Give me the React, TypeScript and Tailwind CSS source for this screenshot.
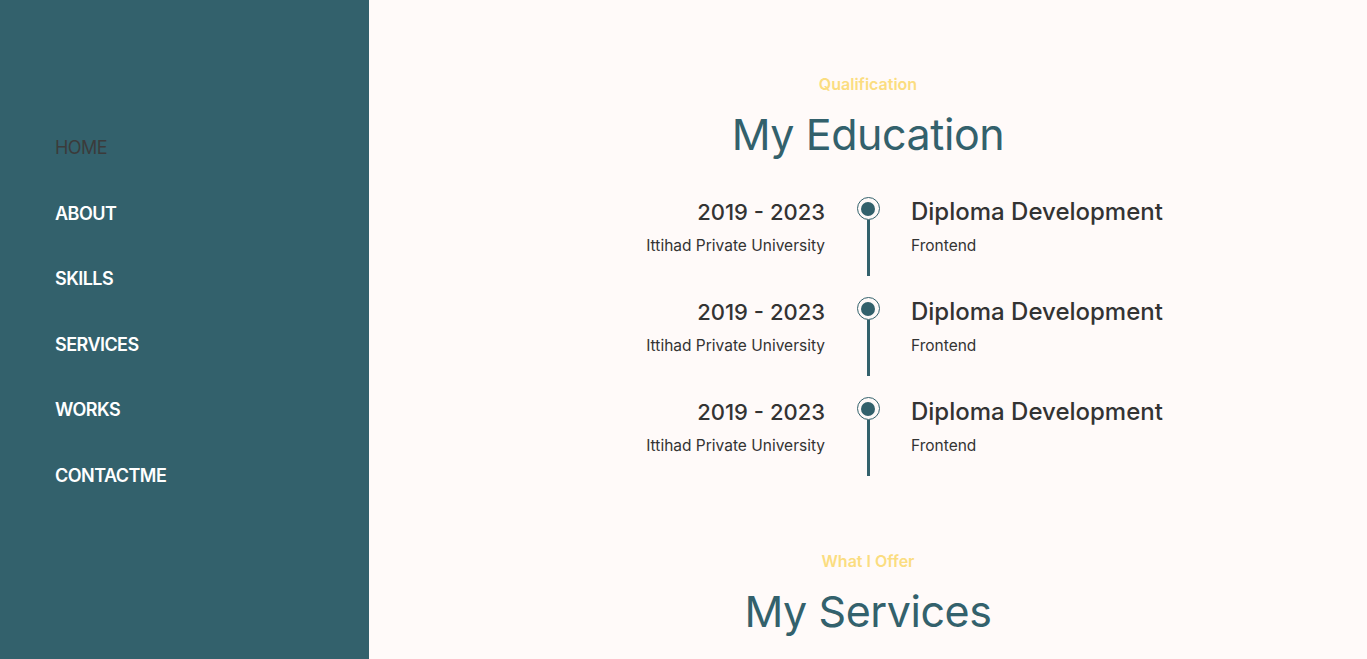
import React from 'react';

const links = ['HOME', 'ABOUT', 'SKILLS', 'SERVICES', 'WORKS', 'CONTACTME'];

const education = [
  { years: '2019 - 2023', school: 'Ittihad Private University', title: 'Diploma Development', field: 'Frontend' },
  { years: '2019 - 2023', school: 'Ittihad Private University', title: 'Diploma Development', field: 'Frontend' },
  { years: '2019 - 2023', school: 'Ittihad Private University', title: 'Diploma Development', field: 'Frontend' },
];

function Sidebar() {
  return (
    <aside className="w-[369px] shrink-0 bg-[#33616c] pt-[134px] pl-[55px]">
      <nav className="flex flex-col">
        {links.map((l, i) => (
          <a
            key={l}
            href="#"
            className={
              'h-[65.5px] text-[18px] leading-[28px] tracking-[-0.03em] ' +
              (i === 0 ? 'font-normal text-[#3b3b3b]' : 'font-semibold text-white')
            }
          >
            {l}
          </a>
        ))}
      </nav>
    </aside>
  );
}

function SectionTitle({ sub, title }: { sub: string; title: string }) {
  return (
    <div className="flex flex-col items-center">
      <div className="text-[16px] leading-[22px] font-semibold text-[#fbdd80]">{sub}</div>
      <h2 className="mt-[15px] text-[43px] leading-[48px] font-normal text-[#33616c] tracking-[-0.01em]">{title}</h2>
    </div>
  );
}

function Timeline() {
  return (
    <div className="mt-[39px] flex flex-col items-center">
      {education.map((e, i) => (
        <div key={i} className="flex h-[100px]">
          <div className="w-[280px] text-right">
            <div className="text-[22px] leading-[30px] font-medium text-[#333]">{e.years}</div>
            <div className="mt-[8px] text-[15.5px] leading-[22px] text-[#333]">{e.school}</div>
          </div>
          <div className="w-[86px] flex flex-col items-center">
            <div className="w-[23px] h-[23px] rounded-full border border-[#33616c] flex items-center justify-center">
              <div className="w-[14px] h-[14px] rounded-full bg-[#33616c]" />
            </div>
            <div className="w-[3px] h-[56px] bg-[#33616c]" />
          </div>
          <div className="w-[280px]">
            <div className="text-[24px] leading-[30px] font-medium text-[#333] whitespace-nowrap">{e.title}</div>
            <div className="mt-[8px] text-[15.5px] leading-[22px] text-[#333]">{e.field}</div>
          </div>
        </div>
      ))}
    </div>
  );
}

export default function App() {
  return (
    <div className="flex h-[659px] overflow-hidden bg-[#fffaf9]" style={{ fontFamily: 'Inter, "Noto Sans", sans-serif' }}>
      <Sidebar />
      <main className="flex-1 pt-[73px]">
        <SectionTitle sub="Qualification" title="My Education" />
        <Timeline />
        <div className="mt-[53px]">
          <SectionTitle sub="What I Offer" title="My Services" />
        </div>
      </main>
    </div>
  );
}
